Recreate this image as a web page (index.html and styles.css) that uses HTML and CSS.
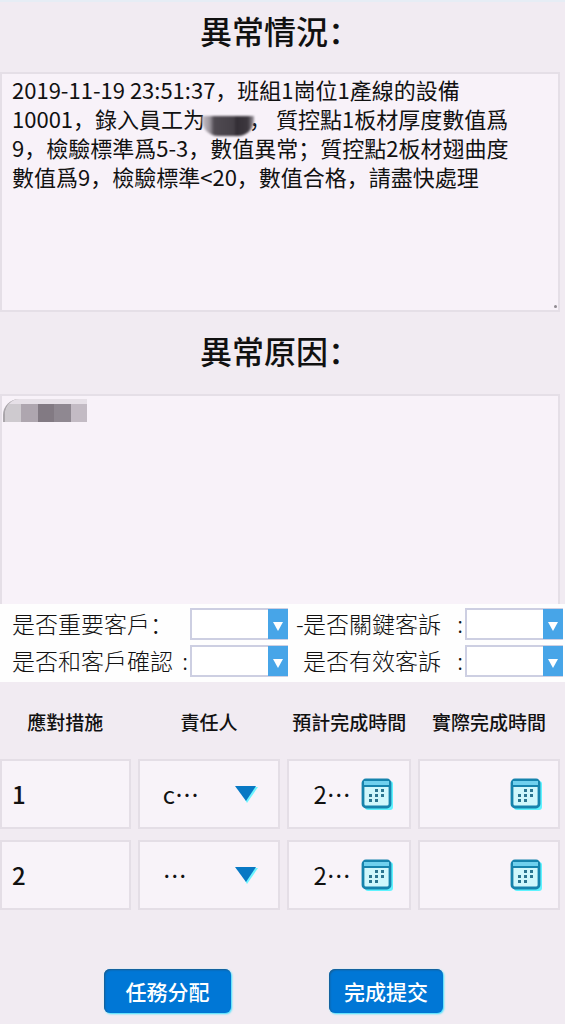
FILE: index.html
```html
<!DOCTYPE html>
<html lang="zh-CN">
<head>
    <meta charset="UTF-8">
    <meta name="viewport" content="width=device-width, initial-scale=1.0">
    <title>異常情況</title>
    <link rel="stylesheet" href="styles.css">
</head>
<body>
    <svg class="sprite" aria-hidden="true">
        <symbol id="icon-calendar" viewBox="0 0 32 32">
            <rect x="4" y="3" width="28" height="29" rx="3" fill="#5ff3ff"/>
            <rect x="2" y="2" width="27" height="27" rx="3" fill="#d0f7fc" stroke="#1683ad" stroke-width="2.8"/>
            <path d="M3 3h25v4H3z" fill="#6fd0ee"/>
            <path d="M2 8h27" stroke="#1683ad" stroke-width="2"/>
            <g fill="#2b7590">
                <path d="M14 11h3v3h-3zM20 11h3v3h-3zM8 16h3v3H8zM14 16h3v3h-3zM20 16h3v3h-3zM8 21h3v3H8zM14 21h3v3h-3z"/>
            </g>
        </symbol>
        <symbol id="icon-down" viewBox="0 0 24 18">
            <path d="M4 2h20L13 18z" fill="#6cf3ff"/>
            <path d="M1 1h21L12 16z" fill="#0878c4"/>
        </symbol>
        <symbol id="icon-caret" viewBox="0 0 10 9">
            <path d="M0 0h10L5 9z" fill="#fff"/>
        </symbol>
    </svg>

    <form class="page">
        <section class="block">
            <h1 class="title"><label for="situation">異常情況：</label></h1>
            <div class="textbox">
                <textarea class="note note-situation" id="situation">2019-11-19 23:51:37，班組1崗位1產線的設備
10001，錄入員工为　　， 質控點1板材厚度數值爲
9，檢驗標準爲5-3，數值異常；質控點2板材翅曲度
數值爲9，檢驗標準&lt;20，數值合格，請盡快處理</textarea>
                <span class="mask mask-name"></span>
                <span class="grip"></span>
            </div>
        </section>

        <section class="block">
            <h1 class="title"><label for="reason">異常原因：</label></h1>
            <div class="textbox">
                <textarea class="note note-reason" id="reason"></textarea>
                <span class="mask mask-reason"><i></i><i></i><i></i><i></i><i></i></span>
            </div>
        </section>

        <section class="checks">
            <div class="check">
                <label for="important">是否重要客戶：</label>
                <div class="dropdown">
                    <select id="important"><option></option><option>是</option><option>否</option></select>
                    <span class="dropdown-arrow"><svg><use href="#icon-caret"/></svg></span>
                </div>
            </div>
            <div class="check check-right">
                <span class="dash">-</span>
                <label for="key">是否關鍵客訴</label>
                <span class="colon">:</span>
                <div class="dropdown">
                    <select id="key"><option></option><option>是</option><option>否</option></select>
                    <span class="dropdown-arrow"><svg><use href="#icon-caret"/></svg></span>
                </div>
            </div>
            <div class="check">
                <label for="confirmed">是否和客戶確認</label>
                <span class="colon">:</span>
                <div class="dropdown">
                    <select id="confirmed"><option></option><option>是</option><option>否</option></select>
                    <span class="dropdown-arrow"><svg><use href="#icon-caret"/></svg></span>
                </div>
            </div>
            <div class="check check-right">
                <span class="dash"></span>
                <label for="valid">是否有效客訴</label>
                <span class="colon">:</span>
                <div class="dropdown">
                    <select id="valid"><option></option><option>是</option><option>否</option></select>
                    <span class="dropdown-arrow"><svg><use href="#icon-caret"/></svg></span>
                </div>
            </div>
        </section>

        <table class="measures">
            <thead>
                <tr>
                    <th>應對措施</th>
                    <th>責任人</th>
                    <th>預計完成時間</th>
                    <th>實際完成時間</th>
                </tr>
            </thead>
            <tbody>
                <tr>
                    <td><input class="step" type="text" value="1" aria-label="應對措施"></td>
                    <td>
                        <select class="owner" aria-label="責任人"><option>c⋯</option></select>
                        <svg class="down"><use href="#icon-down"/></svg>
                    </td>
                    <td>
                        <input class="date" type="text" value="2⋯" aria-label="預計完成時間">
                        <svg class="calendar"><use href="#icon-calendar"/></svg>
                    </td>
                    <td>
                        <input class="date" type="text" aria-label="實際完成時間">
                        <svg class="calendar"><use href="#icon-calendar"/></svg>
                    </td>
                </tr>
                <tr>
                    <td><input class="step" type="text" value="2" aria-label="應對措施"></td>
                    <td>
                        <select class="owner" aria-label="責任人"><option>⋯</option></select>
                        <svg class="down"><use href="#icon-down"/></svg>
                    </td>
                    <td>
                        <input class="date" type="text" value="2⋯" aria-label="預計完成時間">
                        <svg class="calendar"><use href="#icon-calendar"/></svg>
                    </td>
                    <td>
                        <input class="date" type="text" aria-label="實際完成時間">
                        <svg class="calendar"><use href="#icon-calendar"/></svg>
                    </td>
                </tr>
            </tbody>
        </table>

        <div class="actions">
            <button class="btn" type="button">任務分配</button>
            <button class="btn btn-submit" type="button">完成提交</button>
        </div>
    </form>
</body>
</html>
```

FILE: styles.css
```css
* {
    margin: 0;
    padding: 0;
    box-sizing: border-box;
}
body {
    font-family: "Noto Sans CJK SC", "Noto Sans CJK TC", sans-serif;
    background: #f1ebf2;
    color: #111;
}
input,
select,
textarea,
button {
    font: inherit;
    color: inherit;
    border: none;
    outline: none;
    background: transparent;
    appearance: none;
}
.sprite {
    display: none;
}
.page {
    min-height: 100vh;
    border-top: 2px solid #e6edf5;
}
.block {
    padding-right: 5px;
}
.title {
    height: 70px;
    padding-top: 2px;
    font-size: 32px;
    font-weight: 500;
    line-height: 52px;
    text-align: center;
}
.block + .block .title {
    height: 82px;
    padding-top: 12px;
}

/* text boxes */
.textbox {
    position: relative;
    background: #f8f2f9;
    border: 2px solid #e5dfe7;
}
.note {
    display: block;
    width: 100%;
    resize: none;
    overflow: hidden;
    padding: 1px 10px;
    font-size: 22px;
    font-weight: 400;
    line-height: 29px;
    white-space: pre-wrap;
}
.note-situation {
    height: 236px;
}
.note-reason {
    height: 208px;
}
.block + .block .textbox {
    border-bottom: none;
}
.mask {
    position: absolute;
    pointer-events: none;
}
.mask-name {
    left: 200px;
    top: 42px;
    width: 52px;
    height: 20px;
    border-radius: 0 0 16px 16px;
    background: linear-gradient(90deg, #c9c3cb 0, #9a949c 8px, #4f4a51 12px, #454047 32px, #332e35 34px, #3d383f 46px, #a39da5 52px);
    filter: blur(1px);
}
.mask-reason {
    left: 1px;
    top: 3px;
    display: flex;
    width: 84px;
    padding-top: 5px;
    border-left: 2px solid #aaa6ab;
    border-radius: 16px 0 0 0;
    background: #e6e0e7;
    overflow: hidden;
}
.mask-reason i {
    flex: 1;
    height: 18px;
    background: #cecacf;
}
.mask-reason i:nth-child(2) {
    background: #aea6af;
}
.mask-reason i:nth-child(3) {
    background: #827a83;
}
.mask-reason i:nth-child(4) {
    background: #8f8891;
}
.mask-reason i:nth-child(5) {
    background: #c3bbc4;
}
.grip {
    position: absolute;
    right: 1px;
    bottom: 2px;
    width: 3px;
    height: 3px;
    border-radius: 50%;
    background: #8f8a91;
}

/* yes / no questions */
.checks {
    display: grid;
    grid-template-columns: 276fr 267fr;
    gap: 5px 8px;
    padding: 4px 2px 5px 12px;
    background: #fefefe;
}
.check {
    display: flex;
    align-items: center;
    height: 32px;
    font-size: 23px;
    font-weight: 300;
    line-height: 32px;
    white-space: nowrap;
}
.check label,
.check .colon,
.check .dash {
    padding-bottom: 2px;
}
.check label {
    flex: 1;
}
.dash {
    width: 7px;
}
.colon {
    padding-right: 2px;
}
.dropdown {
    position: relative;
    flex: none;
    width: 98px;
    height: 32px;
    border: 2px solid #cdcfe2;
    background: #fff;
}
.dropdown select {
    display: block;
    width: 100%;
    height: 100%;
    padding: 0 24px 0 6px;
    font-size: 18px;
}
.dropdown-arrow {
    position: absolute;
    top: -1px;
    right: -2px;
    bottom: -1px;
    display: flex;
    align-items: center;
    justify-content: center;
    width: 20px;
    padding-top: 4px;
    background: #47a5e8;
    pointer-events: none;
}
.dropdown-arrow svg {
    width: 10px;
    height: 9px;
}

/* measures table */
.measures {
    display: block;
    padding: 22px 5px 0 0;
}
.measures thead,
.measures tbody {
    display: block;
}
.measures tr {
    display: grid;
    grid-template-columns: 131fr 143fr 124fr 142fr;
    gap: 7px;
    margin-bottom: 11px;
}
.measures thead tr {
    margin-bottom: 19px;
}
.measures th {
    font-size: 19px;
    font-weight: 500;
    line-height: 36px;
    white-space: nowrap;
    display: flex;
    justify-content: center;
}
.measures td {
    display: flex;
    align-items: center;
    min-width: 0;
    height: 70px;
    background: #f8f3f9;
    border: 2px solid #e4dee6;
}
.measures input,
.measures select {
    flex: 1;
    min-width: 0;
    height: 66px;
    padding-bottom: 2px;
    font-size: 24px;
}
.measures .step {
    padding-left: 10px;
    font-weight: 500;
}
.measures .owner {
    padding-left: 23px;
    margin-right: -44px;
}
.measures .date {
    padding-left: 24px;
}
.down {
    flex: none;
    width: 24px;
    height: 18px;
    margin-right: 20px;
    pointer-events: none;
}
.calendar {
    flex: none;
    width: 32px;
    height: 32px;
    margin-right: 16px;
}

/* bottom buttons */
.actions {
    display: flex;
    justify-content: center;
    gap: 98px;
    padding: 48px 18px 10px 0;
}
.btn {
    width: 127px;
    height: 44px;
    border-radius: 6px;
    background: #0077d6;
    box-shadow: inset 1px 1px 2px #1c5c8c, 1px 1px 2px #35e0ff;
    color: #fff;
    font-size: 21px;
    font-weight: 500;
    line-height: 40px;
    cursor: pointer;
}
.btn-submit {
    width: 114px;
}
```
